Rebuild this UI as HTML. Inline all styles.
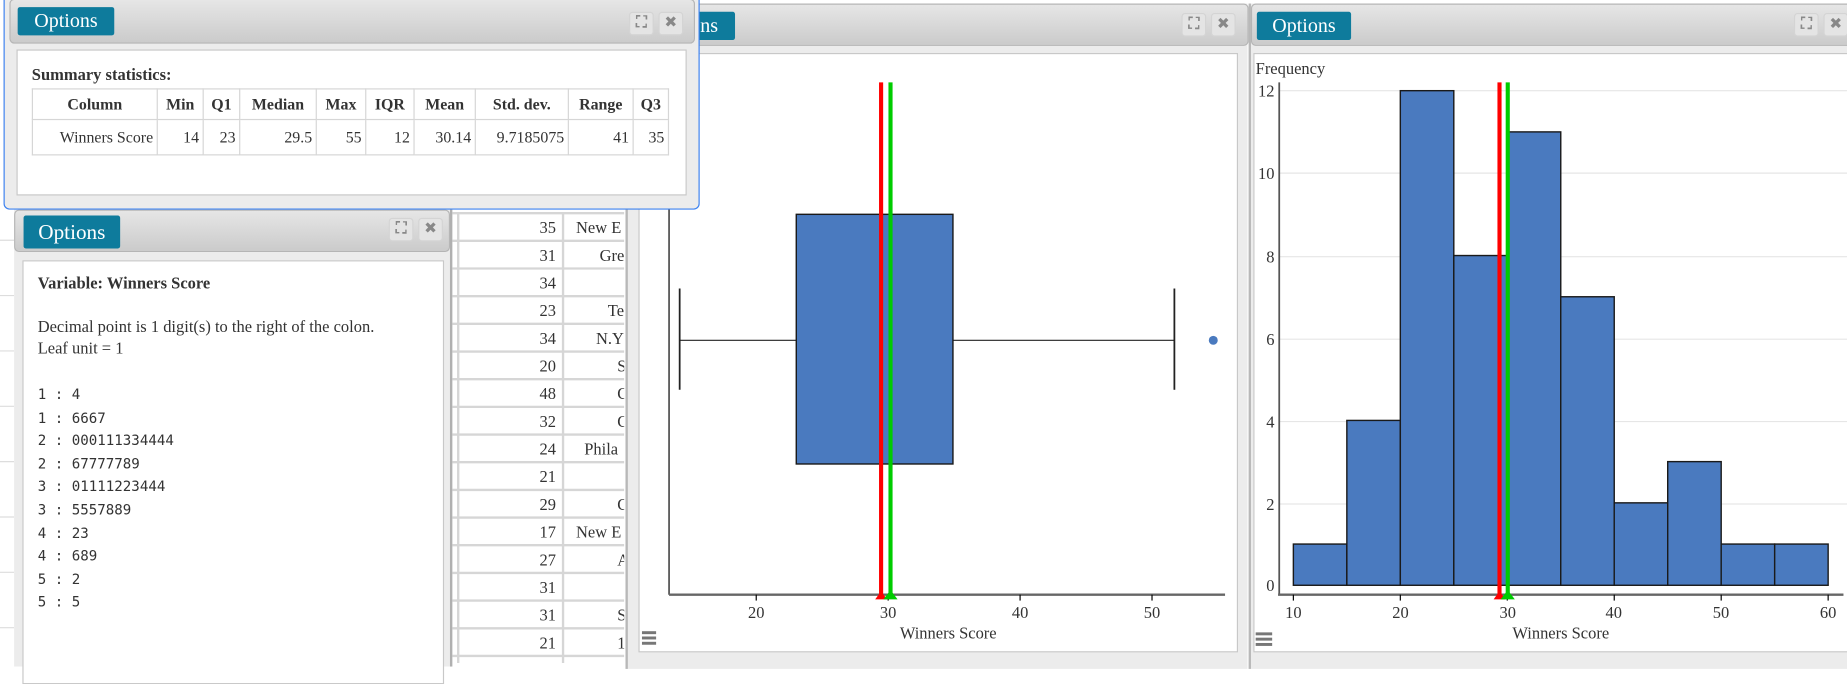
<!DOCTYPE html>
<html><head><meta charset="utf-8"><style>
html,body{margin:0;padding:0;width:1847px;height:663px;overflow:hidden;background:#fff}
#w{position:absolute;left:0;top:0;width:1568px;height:563px;transform:scale(1.17793,1.17762);transform-origin:0 0;font-family:"Liberation Serif","Times New Roman",serif;color:#333}
.abs{position:absolute}
.win{position:absolute;background:#ececec;box-sizing:border-box}
.hdr{position:absolute;background:linear-gradient(#e6e6e6,#cbcbcb);border:1px solid #b5b5b5;border-radius:4px;box-sizing:border-box}
.opt{position:absolute;background:#0e7b9c;color:#fff;font-size:17px;line-height:24px;text-align:center;border-radius:2px;font-family:"Liberation Serif",serif}
.ic{position:absolute;width:21px;height:20px;background:#e4e4e4;border-radius:3px;border:1px solid #d4d4d4;box-sizing:border-box;color:#888;font-size:13px;text-align:center;line-height:18px;font-family:"DejaVu Sans",sans-serif;font-weight:bold}
.box{position:absolute;background:#fff;border:1px solid #c8c8c8;box-sizing:border-box}
table{border-collapse:collapse;font-size:13.5px;font-family:"Liberation Serif",serif;color:#333}
td,th{border:1.5px solid #d6d6d6;padding:0 3px;height:26px;text-align:right;box-sizing:border-box}
th{text-align:center}
.mono{font-family:"DejaVu Sans Mono","Liberation Mono",monospace;font-size:12px;line-height:19.6px;white-space:pre}
</style></head><body><div id="w">

<!-- spreadsheet -->
<div class="abs" style="left:384px;top:180px;width:146px;height:383px;overflow:hidden;z-index:1">
<svg width="146" height="383" font-family="Liberation Serif,serif" font-size="14" fill="#333">
 <line x1="5" y1="0" x2="5" y2="383" stroke="#d6d6d6" stroke-width="2"/>
 <line x1="94" y1="0" x2="94" y2="383" stroke="#d6d6d6" stroke-width="2"/>
 <g stroke="#d6d6d6" stroke-width="2">
  <line x1="0" y1="1" x2="146" y2="1"/><line x1="0" y1="24.5" x2="146" y2="24.5"/><line x1="0" y1="48" x2="146" y2="48"/><line x1="0" y1="71.5" x2="146" y2="71.5"/><line x1="0" y1="95" x2="146" y2="95"/><line x1="0" y1="118.5" x2="146" y2="118.5"/><line x1="0" y1="142" x2="146" y2="142"/><line x1="0" y1="165.5" x2="146" y2="165.5"/><line x1="0" y1="189" x2="146" y2="189"/><line x1="0" y1="212.5" x2="146" y2="212.5"/><line x1="0" y1="236" x2="146" y2="236"/><line x1="0" y1="259.5" x2="146" y2="259.5"/><line x1="0" y1="283" x2="146" y2="283"/><line x1="0" y1="306.5" x2="146" y2="306.5"/><line x1="0" y1="330" x2="146" y2="330"/><line x1="0" y1="353.5" x2="146" y2="353.5"/><line x1="0" y1="377" x2="146" y2="377"/>
 </g>
 <g text-anchor="end">
  <text x="88" y="18">35</text><text x="88" y="41.5">31</text><text x="88" y="65">34</text><text x="88" y="88.5">23</text><text x="88" y="112">34</text><text x="88" y="135.5">20</text><text x="88" y="159">48</text><text x="88" y="182.5">32</text><text x="88" y="206">24</text><text x="88" y="229.5">21</text><text x="88" y="253">29</text><text x="88" y="276.5">17</text><text x="88" y="300">27</text><text x="88" y="323.5">31</text><text x="88" y="347">31</text><text x="88" y="370.5">21</text>
 </g>
 <g>
  <text x="105" y="18">New E</text><text x="125" y="41.5">Gre</text><text x="132" y="88.5">Te</text><text x="122" y="112">N.Y</text><text x="140" y="135.5">S</text><text x="140" y="159">C</text><text x="140" y="182.5">C</text><text x="112" y="206">Phila</text><text x="140" y="253">C</text><text x="105" y="276.5">New E</text><text x="140" y="300">A</text><text x="140" y="347">S</text><text x="140" y="370.5">1</text>
 </g>
</svg></div>
<svg class="abs" style="left:0;top:180px;z-index:1" width="12" height="383"><g stroke="#ddd"><line x1="0" y1="24" x2="12" y2="24"/><line x1="0" y1="71" x2="12" y2="71"/><line x1="0" y1="118" x2="12" y2="118"/><line x1="0" y1="165" x2="12" y2="165"/><line x1="0" y1="212" x2="12" y2="212"/><line x1="0" y1="259" x2="12" y2="259"/><line x1="0" y1="306" x2="12" y2="306"/><line x1="0" y1="353" x2="12" y2="353"/></g></svg>

<!-- stem window -->
<div class="win" style="left:12px;top:176px;width:372px;height:390px;border-right:2px solid #b0b0b0;z-index:2">
 <div class="hdr" style="left:0;top:2px;width:370px;height:36px"></div>
 <div class="opt" style="left:8px;top:7px;width:82px;height:28px;line-height:28px;font-size:18px">Options</div>
 <div class="ic" style="left:318px;top:9px">⛶</div><div class="ic" style="left:343px;top:9px">✖</div>
 <div class="box" style="left:7px;top:45px;width:358px;height:360px">
  <div class="abs" style="left:12px;top:12px;font-weight:bold;font-size:14px">Variable: Winners Score</div>
  <div class="abs" style="left:12px;top:48px;font-size:14px;line-height:18px">Decimal point is 1 digit(s) to the right of the colon.<br>Leaf unit = 1</div>
  <div class="abs mono" style="left:12px;top:104px">1 : 4
1 : 6667
2 : 000111334444
2 : 67777789
3 : 01111223444
3 : 5557889
4 : 23
4 : 689
5 : 2
5 : 5</div>
 </div>
</div>

<!-- boxplot window -->
<div class="abs" style="left:0;top:0;width:1568px;height:563px;z-index:3">
<div class="win" style="left:531px;top:3px;width:528px;height:565px;border-left:2px solid #b8b8b8">
 <div class="hdr" style="left:0;top:0;width:527px;height:36px"></div>
 <div class="ic" style="left:470px;top:8px">⛶</div><div class="ic" style="left:495px;top:8px">✖</div>
 <div class="box" style="left:9px;top:42px;width:509px;height:509px"></div>
</div>
<div class="opt" style="left:585px;top:10px;width:39px;height:24px;text-align:left;overflow:hidden"><span style="margin-left:1px">ons</span></div>
<svg class="abs" style="left:0;top:0" width="1568" height="563" font-family="Liberation Serif,serif" font-size="14" fill="#333">
 <line x1="568" y1="176" x2="568" y2="505" stroke="#555" stroke-width="1.5"/>
 <line x1="568" y1="505" x2="1040" y2="505" stroke="#666" stroke-width="2"/>
 <g stroke="#000"><line x1="642" y1="505" x2="642" y2="510"/><line x1="754" y1="505" x2="754" y2="510"/><line x1="866" y1="505" x2="866" y2="510"/><line x1="978" y1="505" x2="978" y2="510"/></g>
 <g text-anchor="middle"><text x="642" y="525">20</text><text x="754" y="525">30</text><text x="866" y="525">40</text><text x="978" y="525">50</text><text x="805" y="542">Winners Score</text></g>
 <line x1="577" y1="289" x2="676" y2="289" stroke="#222"/><line x1="809" y1="289" x2="997" y2="289" stroke="#222"/>
 <line x1="577" y1="245" x2="577" y2="331" stroke="#222" stroke-width="1.5"/><line x1="997" y1="245" x2="997" y2="331" stroke="#222" stroke-width="1.5"/>
 <rect x="676" y="182" width="133" height="212" fill="#4a7abf" stroke="#1a1a1a" stroke-width="1.2"/>
 <circle cx="1030" cy="289" r="3.8" fill="#4a7abf"/>
 <line x1="748" y1="70" x2="748" y2="505" stroke="#f00" stroke-width="3.5"/>
 <line x1="756" y1="70" x2="756" y2="505" stroke="#0c0" stroke-width="3.5"/>
 <polygon points="743,509 748,502 753,509" fill="#f00"/><polygon points="750,509 756,501 762,509" fill="#0c0"/>
 <g fill="#777"><rect x="545" y="536" width="12" height="2.5"/><rect x="545" y="540.5" width="12" height="2.5"/><rect x="545" y="545" width="12" height="2.5"/></g>
</svg>

<!-- histogram window -->
<div class="win" style="left:1060px;top:3px;width:510px;height:565px;border-left:2px solid #b8b8b8">
 <div class="hdr" style="left:0;top:0;width:512px;height:36px"></div>
 <div class="opt" style="left:5px;top:7px;width:80px;height:24px;font-size:17px">Options</div>
 <div class="ic" style="left:461px;top:8px">⛶</div><div class="ic" style="left:486px;top:8px">✖</div>
 <div class="box" style="left:2px;top:42px;width:510px;height:509px"></div>
</div>
<svg class="abs" style="left:0;top:0" width="1568" height="563" font-family="Liberation Serif,serif" font-size="14" fill="#333">
 <text x="1066" y="63">Frequency</text>
 <g stroke="#e6e6e6"><line x1="1086" y1="77" x2="1568" y2="77"/><line x1="1086" y1="147" x2="1568" y2="147"/><line x1="1086" y1="218" x2="1568" y2="218"/><line x1="1086" y1="288" x2="1568" y2="288"/><line x1="1086" y1="358" x2="1568" y2="358"/><line x1="1086" y1="428" x2="1568" y2="428"/></g>
 <g text-anchor="end"><text x="1082" y="82">12</text><text x="1082" y="152">10</text><text x="1082" y="223">8</text><text x="1082" y="293">6</text><text x="1082" y="363">4</text><text x="1082" y="433">2</text><text x="1082" y="502">0</text></g>
 <line x1="1086" y1="70" x2="1086" y2="505" stroke="#555" stroke-width="1.5"/>
 <line x1="1085" y1="505" x2="1565" y2="505" stroke="#666" stroke-width="2"/>
 <g fill="#4a7abf" stroke="#1a1a1a" stroke-width="1.2">
  <rect x="1098" y="462" width="45.4" height="35"/>
  <rect x="1143.4" y="357" width="45.4" height="140"/>
  <rect x="1188.8" y="77" width="45.4" height="420"/>
  <rect x="1234.2" y="217" width="45.4" height="280"/>
  <rect x="1279.6" y="112" width="45.4" height="385"/>
  <rect x="1325" y="252" width="45.4" height="245"/>
  <rect x="1370.4" y="427" width="45.4" height="70"/>
  <rect x="1415.8" y="392" width="45.4" height="105"/>
  <rect x="1461.2" y="462" width="45.4" height="35"/>
  <rect x="1506.6" y="462" width="45.4" height="35"/>
 </g>
 <g stroke="#000"><line x1="1098" y1="505" x2="1098" y2="510"/><line x1="1188.8" y1="505" x2="1188.8" y2="510"/><line x1="1279.6" y1="505" x2="1279.6" y2="510"/><line x1="1370.4" y1="505" x2="1370.4" y2="510"/><line x1="1461.2" y1="505" x2="1461.2" y2="510"/><line x1="1552" y1="505" x2="1552" y2="510"/></g>
 <g text-anchor="middle"><text x="1098" y="525">10</text><text x="1189" y="525">20</text><text x="1280" y="525">30</text><text x="1370" y="525">40</text><text x="1461" y="525">50</text><text x="1552" y="525">60</text><text x="1325" y="542">Winners Score</text></g>
 <line x1="1273" y1="70" x2="1273" y2="505" stroke="#f00" stroke-width="3.5"/>
 <line x1="1280" y1="70" x2="1280" y2="505" stroke="#0c0" stroke-width="3.5"/>
 <polygon points="1268,509 1273,502 1278,509" fill="#f00"/><polygon points="1274,509 1280,501 1286,509" fill="#0c0"/>
 <g fill="#777"><rect x="1066" y="537" width="14" height="2.5"/><rect x="1066" y="541.5" width="14" height="2.5"/><rect x="1066" y="546" width="14" height="2.5"/></g>
</svg>
</div>

<!-- stats window (topmost) -->
<div class="win" style="left:3px;top:-2px;width:591px;height:180px;border:1.5px solid #3d82f0;border-radius:0 0 5px 5px;z-index:5">
 <div class="hdr" style="left:4px;top:0;width:582px;height:38px"></div>
 <div class="opt" style="left:11px;top:7px;width:82px;height:24px">Options</div>
 <div class="ic" style="left:530px;top:11px">⛶</div><div class="ic" style="left:555px;top:11px">✖</div>
 <div class="box" style="left:10px;top:43px;width:569px;height:124px">
  <div class="abs" style="left:12px;top:14px;font-weight:bold;font-size:14px">Summary statistics:</div>
  <table class="abs" style="left:12px;top:32px">
   <tr><th style="width:106px">Column</th><th style="width:39px">Min</th><th style="width:31px">Q1</th><th style="width:65px">Median</th><th style="width:42px">Max</th><th style="width:41px">IQR</th><th style="width:52px">Mean</th><th style="width:79px">Std. dev.</th><th style="width:55px">Range</th><th style="width:30px">Q3</th></tr>
   <tr><td style="height:30px">Winners Score</td><td>14</td><td>23</td><td>29.5</td><td>55</td><td>12</td><td>30.14</td><td>9.7185075</td><td>41</td><td>35</td></tr>
  </table>
 </div>
</div>
</div></body></html>
